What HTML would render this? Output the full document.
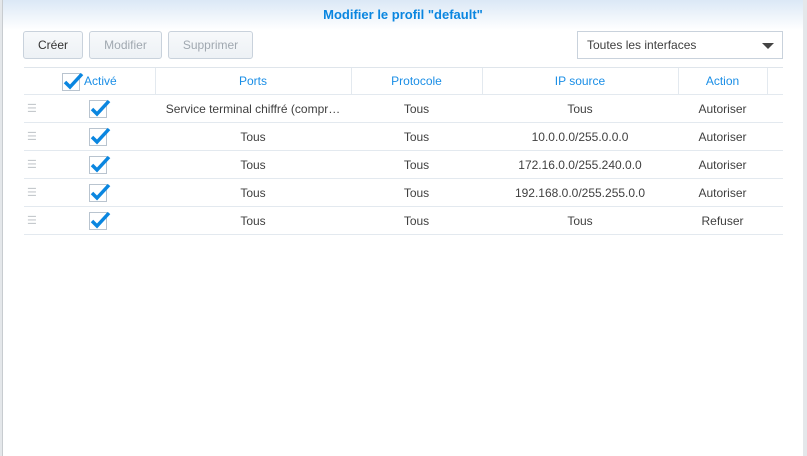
<!DOCTYPE html>
<html><head><meta charset="utf-8"><style>
*{margin:0;padding:0;box-sizing:border-box}
body{width:807px;height:456px;overflow:hidden;background:#e4e7ea;font-family:"Liberation Sans",sans-serif;font-size:12px;color:#404040;position:relative}
.dlg{position:absolute;left:2px;top:0;width:801px;height:456px;background:#fff;border-left:1px solid #c8ccd0}
.hdr{height:30px;background:linear-gradient(#dbe8f6,#fff);text-align:center;color:#0a86e0;font-weight:bold;font-size:13px;line-height:30px}
.btn{position:absolute;top:31px;height:28px;border:1px solid #c9d2dc;border-radius:3px;background:linear-gradient(#f7f9fb,#edf1f5);line-height:26px;text-align:center;font-size:12px}
.sel{position:absolute;left:574px;top:31px;width:206px;height:28px;border:1px solid #c9d2dc;line-height:26px;padding-left:9px;color:#404040}
.sel:after{content:"";position:absolute;right:8px;top:11px;border-left:6px solid transparent;border-right:6px solid transparent;border-top:6px solid #444}
table{position:absolute;left:21px;top:67px;width:759px;border-collapse:collapse}
td,th{height:28px;text-align:center;border-bottom:1px solid #e3e9ef;font-weight:normal;white-space:nowrap}
th{height:27px;color:#1a8ee6;border-top:1px solid #dfe5eb;font-size:12px}
th+th{border-left:1px solid #e3e9ef}
.cb{display:inline-block;width:18px;height:18px;border:1px solid #b9c4cf;vertical-align:middle;position:relative;background:#fff}
.cb svg{position:absolute;left:-1px;top:-3px}
.h{color:#c5c9cd;font-size:11px;text-align:left;padding-left:3px}
.c{text-align:left;padding-left:33px}
.hc{text-align:left;padding-left:38px}
.hc .cb{margin-top:2px}
.hc span.t{vertical-align:middle;margin-left:4px}
</style></head><body>
<div class="dlg">
<div class="hdr">Modifier le profil "default"</div>
<div class="btn" style="left:20px;width:60px;color:#333">Créer</div>
<div class="btn" style="left:86px;width:73px;color:#a0a8b0">Modifier</div>
<div class="btn" style="left:165px;width:85px;color:#a0a8b0">Supprimer</div>
<div class="sel">Toutes les interfaces</div>
<table>
<colgroup><col style="width:32px"><col style="width:99px"><col style="width:196px"><col style="width:131px"><col style="width:196px"><col style="width:89px"><col style="width:16px"></colgroup>
<tr><th class="hc" colspan="2"><span class="cb"><svg width="22" height="20" viewBox="0 0 22 20"><path d="M3 11l5 5L20 3" stroke="#0a86e0" stroke-width="3.5" fill="none"/></svg></span><span class="t">Activé</span></th><th>Ports</th><th>Protocole</th><th>IP source</th><th>Action</th><th></th></tr>
<tr><td class="h">☰</td><td class="c"><span class="cb"><svg width="22" height="20" viewBox="0 0 22 20"><path d="M3 11l5 5L20 3" stroke="#0a86e0" stroke-width="3.5" fill="none"/></svg></span></td><td>Service terminal chiffré (compr…</td><td>Tous</td><td>Tous</td><td>Autoriser</td><td></td></tr>
<tr><td class="h">☰</td><td class="c"><span class="cb"><svg width="22" height="20" viewBox="0 0 22 20"><path d="M3 11l5 5L20 3" stroke="#0a86e0" stroke-width="3.5" fill="none"/></svg></span></td><td>Tous</td><td>Tous</td><td>10.0.0.0/255.0.0.0</td><td>Autoriser</td><td></td></tr>
<tr><td class="h">☰</td><td class="c"><span class="cb"><svg width="22" height="20" viewBox="0 0 22 20"><path d="M3 11l5 5L20 3" stroke="#0a86e0" stroke-width="3.5" fill="none"/></svg></span></td><td>Tous</td><td>Tous</td><td>172.16.0.0/255.240.0.0</td><td>Autoriser</td><td></td></tr>
<tr><td class="h">☰</td><td class="c"><span class="cb"><svg width="22" height="20" viewBox="0 0 22 20"><path d="M3 11l5 5L20 3" stroke="#0a86e0" stroke-width="3.5" fill="none"/></svg></span></td><td>Tous</td><td>Tous</td><td>192.168.0.0/255.255.0.0</td><td>Autoriser</td><td></td></tr>
<tr><td class="h">☰</td><td class="c"><span class="cb"><svg width="22" height="20" viewBox="0 0 22 20"><path d="M3 11l5 5L20 3" stroke="#0a86e0" stroke-width="3.5" fill="none"/></svg></span></td><td>Tous</td><td>Tous</td><td>Tous</td><td>Refuser</td><td></td></tr>
</table>
</div>
</body></html>
